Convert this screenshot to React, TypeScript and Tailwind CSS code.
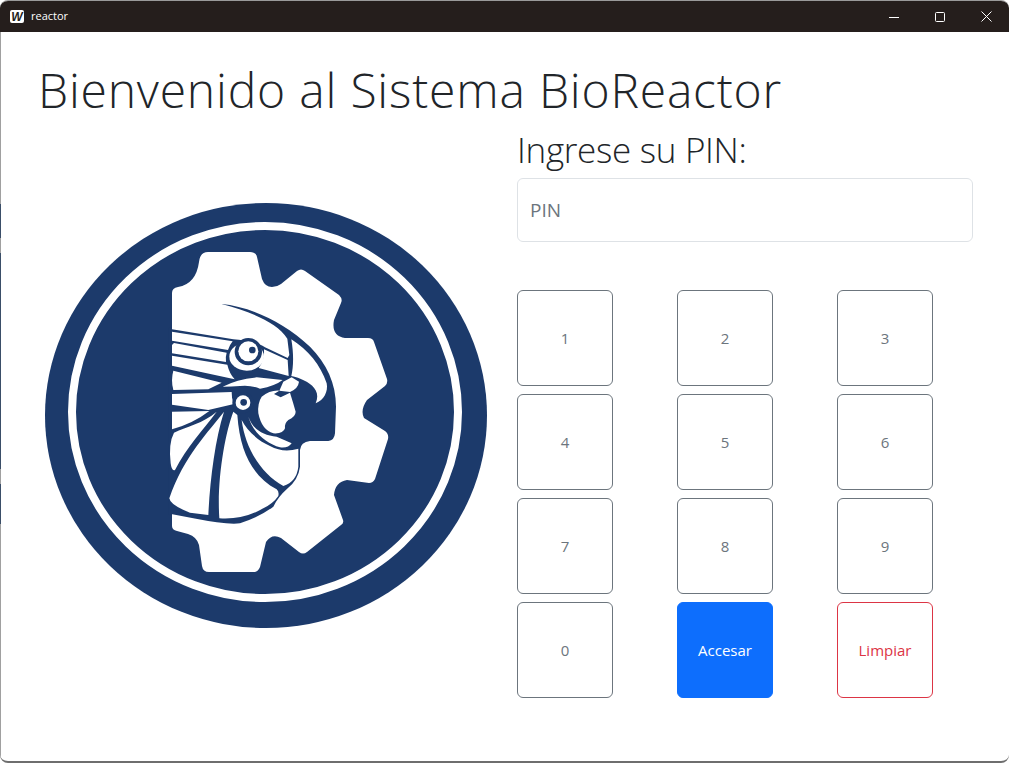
const F = { fontFamily: '"Open Sans", "Noto Sans", sans-serif' };

function Logo() {
  return (
    <svg width="452" height="436" viewBox="40 198 452 436" className="block">
      <ellipse cx="266" cy="415.5" rx="221" ry="212.5" fill="#1c3a6b" />
      <ellipse cx="265" cy="412" rx="193" ry="186" fill="none" stroke="#fff" strokeWidth="8" />
      <path
        fill="#fff"
        d="M172 293 Q172 288 178 287 Q196 284 199 262 Q200 252 208 252 L250 252 Q256 252 257 257 L262 279 Q265 287 272 287 Q277 287 281 284 L297 271 Q301 268 305 271 L339 295 Q343 299 341 303 L334 320 Q331 336 345 338 L368 338 Q373 338 374 342 L387 379 Q388 383 385 386 L367 400 Q360 410 364 418 L385 431 Q389 434 388 439 L375 479 Q373 483 369 483 L347 480 Q335 482 334 495 L343 520 Q344 523 341 525 L307 552 Q303 555 299 552 L281 538 Q272 533 266 542 L260 567 Q258 572 254 572 L209 572 Q203 572 202 566 L199 545 Q197 537 188 534 L177 531 Q172 530 172 526 Z"
      />
      <g transform="translate(150 240) scale(0.33333)">
        <path
          fill="#1c3a6b"
          d="M215 192 C300 200 400 245 480 320 C530 370 558 430 558 500 L555 580 Q553 602 535 603 L480 603 Q452 606 450 630 L450 680 Q445 720 410 748 Q385 770 370 800 Q330 830 270 850 Q230 855 130 835 L67 823 L55 823 L55 262 L200 262 Z"
        />
        <path fill="#fff" d="M66 180 L215 192 C300 215 380 245 412 296 L418 345 L413 354 L345 322 C320 305 280 300 250 298 L66 268 Z" />
        <path fill="#fff" d="M424 298 C474 330 512 375 530 430 C535 455 522 480 497 490 C510 460 495 440 470 425 C450 415 436 410 424 408 C431 380 431 340 424 298 Z" />
        <path fill="#fff" d="M66 275 L248 304 Q238 316 234 330 L66 302 Z" />
        <path fill="#fff" d="M72 309 L230 338 Q226 350 228 366 L66 340 L66 315 Z" />
        <path fill="#fff" d="M66 347 L232 374 Q238 400 254 418 L66 377 Z" />
        <ellipse cx="290" cy="350" rx="52" ry="42" fill="#fff" />
        <circle cx="295" cy="335" r="41" fill="#1c3a6b" />
        <circle cx="295" cy="334" r="30" fill="#fff" />
        <circle cx="307" cy="330" r="10" fill="#1c3a6b" />
        <path fill="#fff" d="M342 328 L413 360 L416 408 L326 384 Q345 360 342 328 Z" />
        <path fill="#fff" d="M70 392 L215 428 L175 448 L70 450 Q62 420 70 392 Z" />
        <path fill="#fff" d="M218 440 Q260 418 320 412 L398 420 Q375 438 330 446 Q300 434 270 438 Q245 440 218 440 Z" />
        <path fill="#fff" d="M66 462 L245 456 Q244 475 252 492 L175 510 L66 494 Z" />
        <circle cx="279" cy="488" r="32" fill="#1c3a6b" />
        <circle cx="279" cy="488" r="22" fill="#fff" />
        <circle cx="281" cy="487" r="10" fill="#1c3a6b" />
        <path fill="#fff" d="M400 425 L425 412 L447 425 Q445 445 420 456 L388 452 Z" />
        <path fill="#fff" d="M335 470 Q360 450 388 452 L372 462 L392 472 L420 458 Q430 490 437 515 Q437 530 415 540 Q403 550 405 565 Q400 582 370 580 Q335 570 325 520 Q322 490 335 470 Z" />
        <path fill="#fff" d="M66 515 L178 513 Q130 550 66 568 Z" />
        <path fill="#fff" d="M200 515 C160 550 110 560 72 578 Q55 610 62 670 Q65 695 75 690 C110 620 160 570 200 515 Z" />
        <path fill="#fff" d="M222 515 C180 570 100 650 58 775 Q60 795 120 818 L175 825 C180 720 195 600 222 515 Z" />
        <path fill="#fff" d="M250 515 C225 580 200 720 208 835 Q280 840 340 805 Q370 790 385 768 Q388 755 380 748 C310 710 270 640 262 525 Z" />
        <path fill="#fff" d="M275 540 C285 620 330 700 400 738 Q440 725 445 680 L445 626 Q400 640 360 618 C320 600 290 570 275 540 Z" />
        <path fill="#fff" d="M295 530 C310 570 340 585 380 590 L425 610 Q415 625 390 622 C350 610 310 580 295 530 Z" />
      </g>
    </svg>
  );
}

function Key({ label, tone = "gray" }: { label: string; tone?: "gray" | "blue" | "red" }) {
  const cls =
    tone === "blue"
      ? "bg-[#0d6efd] border-[#0d6efd] text-white"
      : tone === "red"
        ? "bg-white border-[#dc3545] text-[#dc3545]"
        : "bg-white border-[#6c757d] text-[#6c757d]";
  return (
    <button className={`w-24 h-24 rounded-md border text-[15px] flex items-center justify-center ${cls}`} style={F}>
      {label}
    </button>
  );
}

function EdgeStrip() {
  const parts: [string, number][] = [
    ["#a0a0a0", 203], ["#3a4e68", 34], ["#a0a0a0", 15], ["#3a4e68", 216],
    ["#a0a0a0", 15], ["#3a4e68", 40], ["#a0a0a0", 240],
  ];
  return (
    <div className="absolute left-0 top-0 w-px flex flex-col">
      {parts.map(([c, h], i) => (
        <div key={i} style={{ background: c, height: h }} />
      ))}
    </div>
  );
}

export default function App() {
  const keys = ["1", "2", "3", "4", "5", "6", "7", "8", "9", "0"];
  return (
    <div className="relative w-[1009px] h-[763px] overflow-hidden bg-white flex flex-col rounded-lg border-t border-[#9a9a9a] border-b-2 border-b-[#6e6e6e]" style={F}>
      <EdgeStrip />
      <div className="h-[31px] shrink-0 bg-[#251e1c] flex items-center text-white relative">
        <div className="ml-[10px] w-[14px] h-[13px] bg-white rounded-[2px] flex items-center justify-center text-[#251e1c] text-[12px] font-extrabold italic leading-none" style={{ fontFamily: '"Liberation Sans", sans-serif' }}>
          W
        </div>
        <span className="ml-[7px] text-[11px]">reactor</span>
        <div className="ml-auto flex items-center">
          <div className="w-[46px] h-[31px] flex items-center justify-center">
            <svg width="10" height="10" viewBox="0 0 10 10"><path d="M0 5.5H10" stroke="#fff" strokeWidth="1" /></svg>
          </div>
          <div className="w-[44px] h-[31px] flex items-center justify-center mx-[1px]">
            <svg width="10" height="10" viewBox="0 0 10 10"><rect x="0.5" y="0.5" width="9" height="9" rx="1" fill="none" stroke="#fff" /></svg>
          </div>
          <div className="w-[46px] h-[31px] flex items-center justify-center">
            <svg width="11" height="11" viewBox="0 0 11 11"><path d="M0.5 0.5L10.5 10.5M10.5 0.5L0.5 10.5" stroke="#fff" /></svg>
          </div>
        </div>
      </div>
      <div className="flex-1 flex flex-col pl-[38px]">
        <h1 className="mt-[22px] text-[48px] tracking-[0.8px] leading-[72px] font-light text-[#212529] whitespace-nowrap">Bienvenido al Sistema BioReactor</h1>
        <div className="flex">
          <div className="w-[479px] shrink-0 pt-[72px] ml-[2px]">
            <Logo />
          </div>
          <div className="w-[456px] shrink-0 -ml-[2px]">
            <div className="text-[35px] tracking-[-0.3px] leading-[48px] font-light text-[#212529]">Ingrese su PIN:</div>
            <div className="mt-[4px] h-16 w-[456px] rounded-md border border-[#dee2e6] flex items-center px-3 text-[#6c757d] text-[19px]">PIN</div>
            <div className="mt-12 grid grid-cols-[160px_160px_160px] auto-rows-[96px] gap-y-2 w-[480px]">
              {keys.map((k) => (
                <Key key={k} label={k} />
              ))}
              <Key label="Accesar" tone="blue" />
              <Key label="Limpiar" tone="red" />
            </div>
          </div>
        </div>
      </div>
    </div>
  );
}
